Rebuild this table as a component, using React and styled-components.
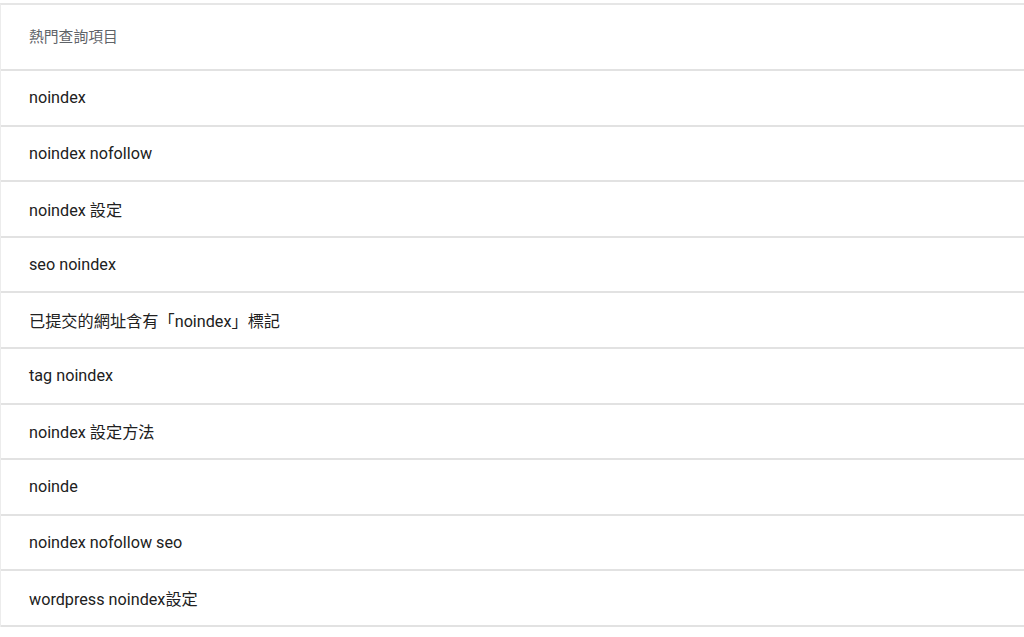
import styled, { createGlobalStyle } from 'styled-components';

const GlobalStyle = createGlobalStyle`
	html, body {
		margin: 0;
		padding: 0;
		background: #ffffff;
	}
	body {
		font-family: Roboto, 'Noto Sans CJK TC', sans-serif;
	}
`;

const QUERIES = [
	'noindex',
	'noindex nofollow',
	'noindex 設定',
	'seo noindex',
	'已提交的網址含有「noindex」標記',
	'tag noindex',
	'noindex 設定方法',
	'noinde',
	'noindex nofollow seo',
	'wordpress noindex設定',
];

function App() {
	return (
		<>
			<GlobalStyle />
			<Page>
				<Table>
					<HeaderRow>熱門查詢項目</HeaderRow>
					{QUERIES.map((q) => (
						<Row key={q}>{q}</Row>
					))}
				</Table>
			</Page>
		</>
	);
}

const Page = styled.div`
	padding-top: 3px;
	height: 637px;
	box-sizing: border-box;
	overflow: hidden;
`;

const Table = styled.div`
	display: flex;
	flex-direction: column;
	border-top: 2px solid #e6e6e6;
	border-left: 1px solid #ececec;
`;

const HeaderRow = styled.div`
	display: flex;
	align-items: center;
	box-sizing: border-box;
	height: 66px;
	padding: 0 0 3px 28px;
	border-bottom: 2px solid #e2e2e2;
	font-size: 14.8px;
	color: #5f6368;
`;

const Row = styled.div`
	display: flex;
	align-items: center;
	box-sizing: border-box;
	height: 55.6px;
	padding-left: 28px;
	border-bottom: 2px solid #e2e2e2;
	font-size: 16.2px;
	color: #212121;
`;

export default App;
